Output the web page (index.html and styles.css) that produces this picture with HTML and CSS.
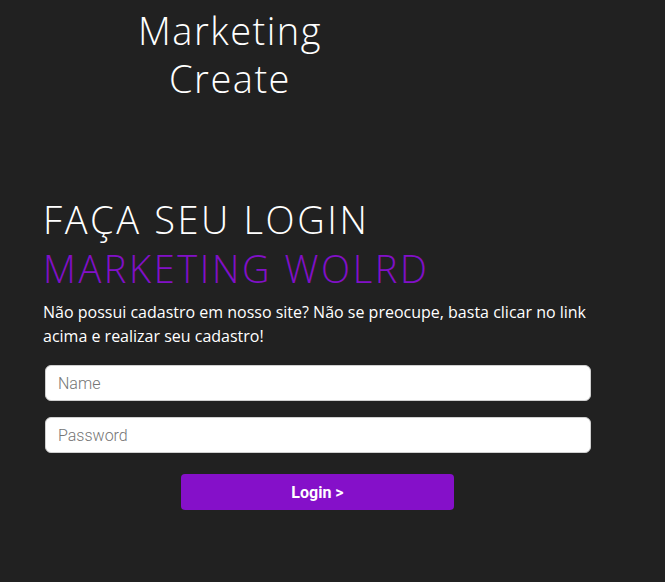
FILE: index.html
```html
<!DOCTYPE html>
<html lang="pt-BR">
<head>
<meta charset="utf-8">
<title>Marketing Create</title>
<link rel="stylesheet" href="styles.css">
</head>
<body>
  <header class="brand">
    <h2 class="brand-title">Marketing<br>Create</h2>
  </header>
  <main class="login">
    <h1 class="login-title">FAÇA SEU LOGIN<br><span class="accent">MARKETING WOLRD</span></h1>
    <p class="login-text">Não possui cadastro em nosso site? Não se preocupe, basta clicar no link acima e realizar seu cadastro!</p>
    <form class="login-form">
      <input class="field" type="text" placeholder="Name">
      <input class="field" type="password" placeholder="Password">
      <button class="btn" type="button">Login &gt;</button>
    </form>
  </main>
</body>
</html>
```

FILE: styles.css
```css
* { box-sizing: border-box; }
html, body { margin: 0; padding: 0; }
body {
  background: #212121;
  color: #fff;
  font-family: "Open Sans", "Noto Sans", sans-serif;
  width: 665px;
  height: 582px;
  overflow: hidden;
}
.brand {
  width: 460px;
  text-align: center;
  padding-top: 6px;
}
.brand-title {
  margin: 0;
  font-size: 38px;
  font-weight: 300;
  line-height: 48px;
  letter-spacing: 1.5px;
}
.login {
  padding: 0 0 0 43px;
  width: 600px;
  margin-top: 93px;
}
.login-title {
  margin: 0;
  font-size: 38px;
  font-weight: 300;
  line-height: 49px;
  letter-spacing: 2.6px;
}
.accent { color: #8110c8; }
.login-text {
  margin: 7px 0 0;
  font-size: 16px;
  line-height: 24px;
  font-weight: 400;
  width: 548px;
}
.login-form {
  margin-top: 17px;
  display: flex;
  flex-direction: column;
  align-items: flex-start;
  padding-left: 2px;
}
.field {
  width: 546px;
  height: 36px;
  border: 1px solid #cfcfcf;
  border-radius: 6px;
  background: #fff;
  padding: 0 12px;
  font-family: Roboto, sans-serif;
  font-size: 16px;
  font-weight: 300;
  margin-bottom: 16px;
}
.field::placeholder { color: #757575; }
.btn {
  margin: 5px 0 0 136px;
  width: 273px;
  height: 36px;
  border: none;
  border-radius: 4px;
  background: #8510c9;
  color: #fff;
  font-family: Roboto, sans-serif;
  font-weight: 700;
  font-size: 16px;
}
```
